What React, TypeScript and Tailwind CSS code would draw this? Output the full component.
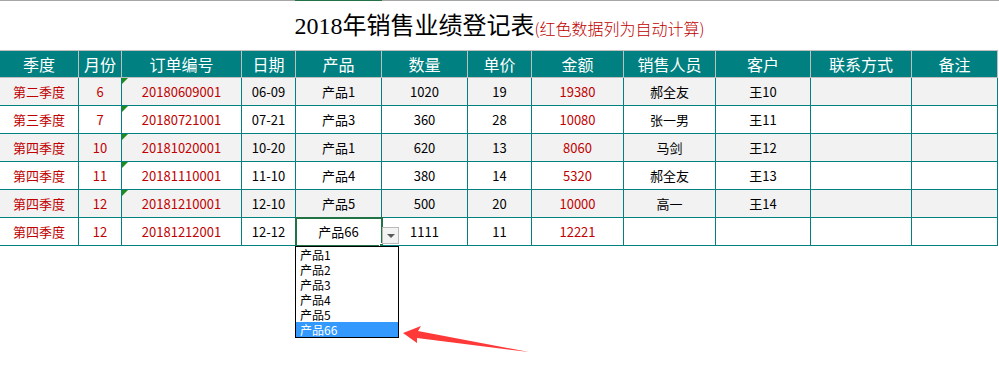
import React from "react";

const cols = "grid-cols-[79px_43px_120px_54px_86px_86px_64px_92px_92px_95px_101px_86px]";

const headers = ["季度", "月份", "订单编号", "日期", "产品", "数量", "单价", "金额", "销售人员", "客户", "联系方式", "备注"];

const rows = [
  ["第二季度", "6", "20180609001", "06-09", "产品1", "1020", "19", "19380", "郝全友", "王10"],
  ["第三季度", "7", "20180721001", "07-21", "产品3", "360", "28", "10080", "张一男", "王11"],
  ["第四季度", "10", "20181020001", "10-20", "产品1", "620", "13", "8060", "马剑", "王12"],
  ["第四季度", "11", "20181110001", "11-10", "产品4", "380", "14", "5320", "郝全友", "王13"],
  ["第四季度", "12", "20181210001", "12-10", "产品5", "500", "20", "10000", "高一", "王14"],
  ["第四季度", "12", "20181212001", "12-12", "产品66", "1111", "11", "12221", "", ""],
];

// columns whose values are computed (red)
const redCols = [0, 1, 2, 7];

const options = ["产品1", "产品2", "产品3", "产品4", "产品5", "产品66"];

function Dropdown() {
  return (
    <>
      {/* selected cell outline */}
      <div className="absolute -left-px -top-px w-[88px] h-[30px] border-2 border-[#217346]" />
      <div className="absolute left-[83px] top-[25px] w-[5px] h-[5px] bg-[#217346] border border-white" />
      {/* dropdown button */}
      <div className="absolute left-[86px] top-[9px] w-[17px] h-[17px] border border-[#b9b9b9] bg-[#f3f3f3] flex items-center justify-center">
        <div className="w-0 h-0 border-l-[4px] border-r-[4px] border-t-[4px] border-l-transparent border-r-transparent border-t-[#5a5a5a]" />
      </div>
      {/* list */}
      <div className="absolute -left-px top-[28px] w-[104px] border border-black bg-white z-10">
        {options.map((o, i) => (
          <div
            key={o}
            className={
              "h-[15px] leading-[15px] overflow-hidden pl-[4px] text-[12px] text-left " +
              (i === options.length - 1 ? "bg-[#3399ff] text-white" : "text-black")
            }
          >
            {o}
          </div>
        ))}
      </div>
    </>
  );
}

export default function App() {
  return (
    <div
      className="relative w-[999px] h-[388px] bg-white overflow-hidden"
      style={{ fontFamily: '"Noto Sans CJK SC", sans-serif' }}
    >
      <div className="relative h-px bg-[#a6a6a6]">
        <div className="absolute left-[295px] top-0 w-[87px] h-px bg-[#217346]" />
      </div>

      <div className="h-[49px] flex items-center justify-center pt-[1px]">
        <span
          className="text-[24px] leading-none text-black"
          style={{ fontFamily: '"Liberation Serif", "Noto Sans CJK SC", serif' }}
        >
          2018年销售业绩登记表
        </span>
        <span className="text-[16px] leading-none font-light text-[#c00000] mt-[4px]">(红色数据列为自动计算)</span>
      </div>

      {/* header */}
      <div className={"grid " + cols + " w-[998px] bg-[#008080] border-y border-[#bfbfbf]"}>
        {headers.map((h) => (
          <div
            key={h}
            className="h-[26px] border-r border-[#bfbfbf] flex items-center justify-center text-white text-[16px]"
          >
            {h}
          </div>
        ))}
      </div>

      {/* body */}
      {rows.map((r, ri) => (
        <div
          key={ri}
          className={"grid " + cols + " w-[998px] " + (ri % 2 === 0 ? "bg-[#f2f2f2]" : "bg-white")}
        >
          {[...r, "", ""].map((c, ci) => (
            <div
              key={ci}
              className={
                "relative h-[28px] border-r border-b border-[#008080] flex items-center justify-center text-[13px] " +
                (redCols.includes(ci) ? "text-[#c00000]" : "text-black")
              }
            >
              {ci === 2 && ri < 5 && (
                <div className="absolute left-0 top-0 w-[6px] h-[6px] bg-[#1f8a1f] [clip-path:polygon(0_0,100%_0,0_100%)]" />
              )}
              {c}
              {ci === 4 && ri === 5 && <Dropdown />}
            </div>
          ))}
        </div>
      ))}

      {/* red annotation arrow */}
      <svg className="absolute left-0 top-0 pointer-events-none" width="999" height="388">
        <polygon
          points="403,333 421,326 418,331 529,352 417,338 417,343"
          fill="#ff3838"
        />
      </svg>
    </div>
  );
}
